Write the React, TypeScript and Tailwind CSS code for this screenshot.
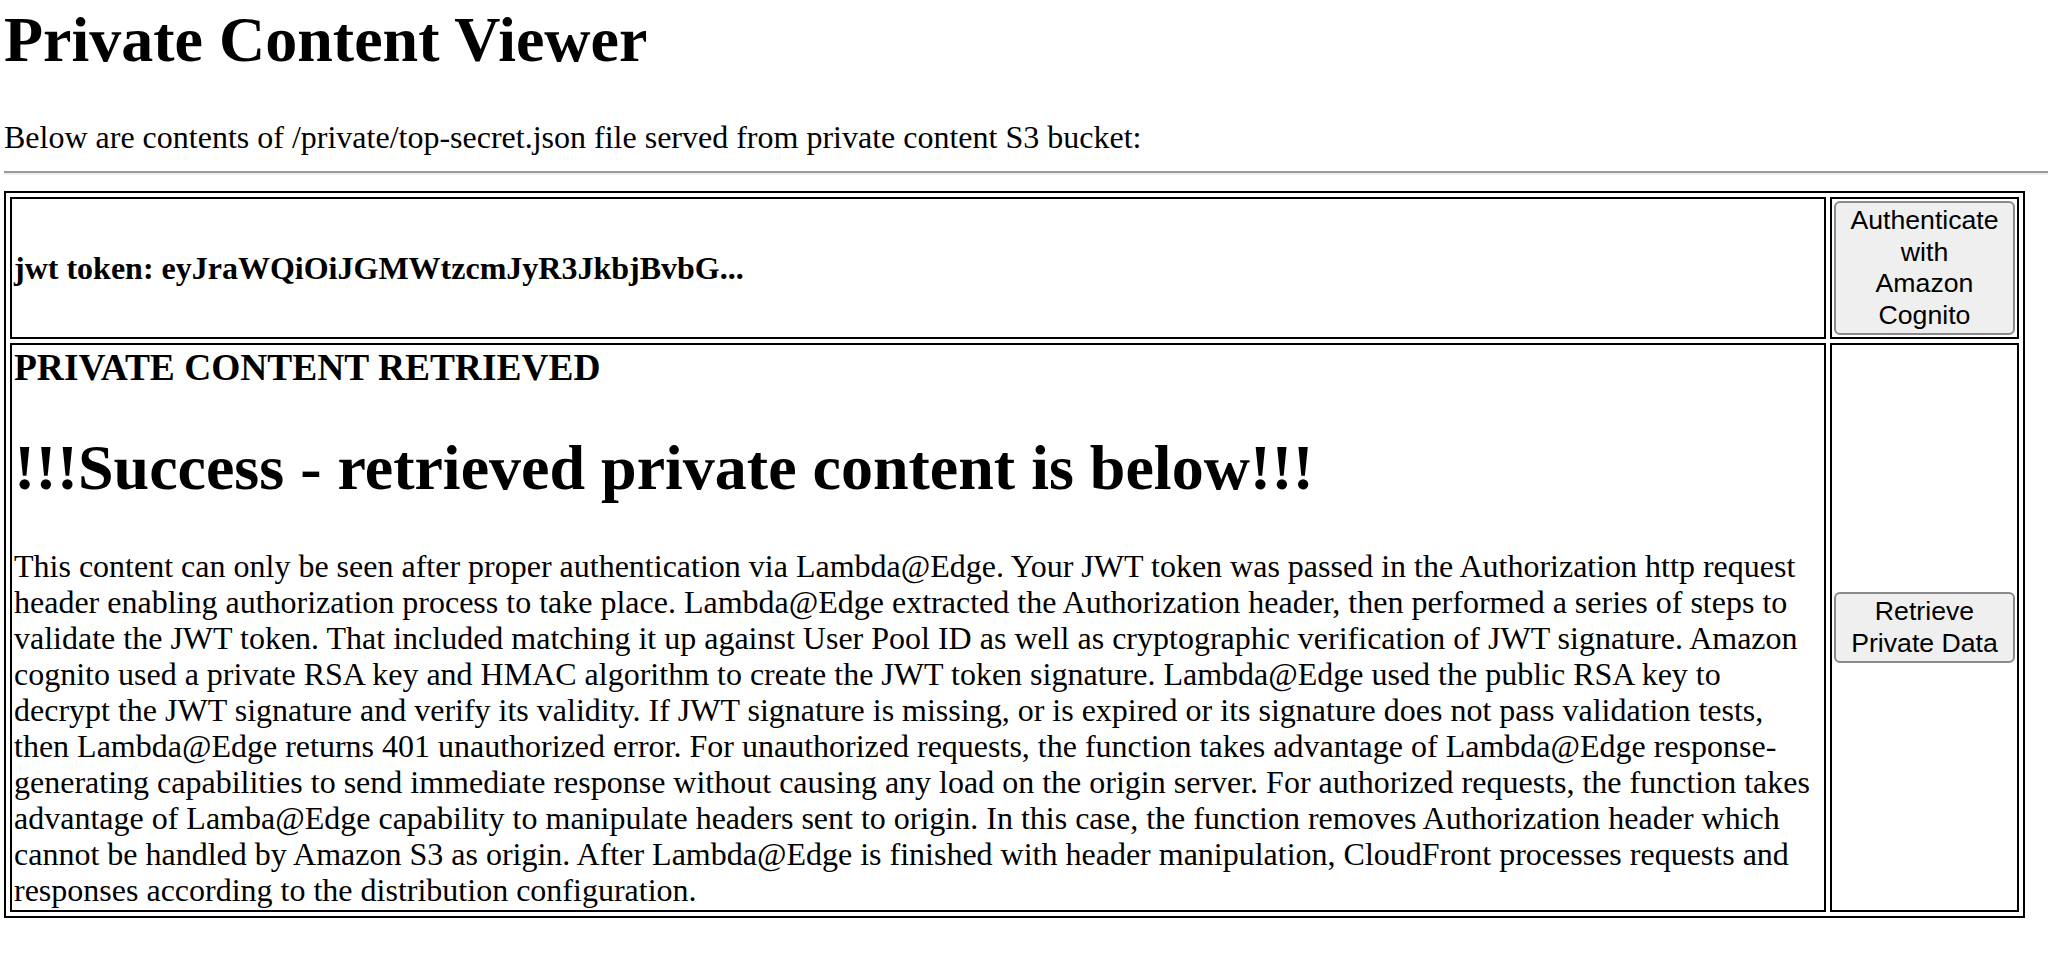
const paragraph = [
  'This content can only be seen after proper authentication via Lambda@Edge. Your JWT token was passed in the Authorization http request',
  'header enabling authorization process to take place. Lambda@Edge extracted the Authorization header, then performed a series of steps to',
  'validate the JWT token. That included matching it up against User Pool ID as well as cryptographic verification of JWT signature. Amazon',
  'cognito used a private RSA key and HMAC algorithm to create the JWT token signature. Lambda@Edge used the public RSA key to',
  'decrypt the JWT signature and verify its validity. If JWT signature is missing, or is expired or its signature does not pass validation tests,',
  'then Lambda@Edge returns 401 unauthorized error. For unauthorized requests, the function takes advantage of Lambda@Edge response-',
  'generating capabilities to send immediate response without causing any load on the origin server. For authorized requests, the function takes',
  'advantage of Lamba@Edge capability to manipulate headers sent to origin. In this case, the function removes Authorization header which',
  'cannot be handled by Amazon S3 as origin. After Lambda@Edge is finished with header manipulation, CloudFront processes requests and',
  'responses according to the distribution configuration.',
];

function PlainButton({ lines }: { lines: string[] }) {
  return (
    <button className="w-[181px] px-[12px] py-[2px] border-2 border-[#8a8a8a] rounded-[6px] bg-[#efefef] text-black text-[26.67px] leading-[31.5px] text-center font-['Liberation_Sans',Arial,sans-serif]">
      {lines.map((l, i) => (
        <span key={i}>
          {l}
          {i < lines.length - 1 && <br />}
        </span>
      ))}
    </button>
  );
}

export default function App() {
  return (
    <div className="bg-white min-h-screen pl-[4px] pt-[4px] text-black font-['Liberation_Serif','Times_New_Roman',serif]">
      <h1 className="m-0 mb-[43px] text-[64px] leading-[72px] font-bold">Private Content Viewer</h1>
      <div className="text-[32px] leading-[36px]">
        Below are contents of /private/top-secret.json file served from private content S3 bucket:
      </div>
      <hr className="my-[16px] h-0 border-0 border-t-2 border-t-[#9a9a9a] border-b-2 border-b-[#eeeeee]" />
      <table className="w-[2021px] border-separate border-spacing-[4px] border-2 border-black">
        <tbody>
          <tr>
            <td className="border-2 border-black p-[2px] align-middle">
              <div className="text-[32px] leading-[36px] font-bold">jwt token: eyJraWQiOiJGMWtzcmJyR3JkbjBvbG...</div>
            </td>
            <td className="w-[189px] border-2 border-black p-[2px] align-middle">
              <PlainButton lines={['Authenticate', 'with', 'Amazon', 'Cognito']} />
            </td>
          </tr>
          <tr>
            <td className="border-2 border-black p-[2px] align-middle">
              <h3 className="m-0 text-[37.44px] leading-[42px] font-bold">PRIVATE CONTENT RETRIEVED</h3>
              <h1 className="mt-[43px] mb-[44px] text-[64px] leading-[72px] font-bold">
                !!!Success - retrieved private content is below!!!
              </h1>
              <p className="text-[32px] leading-[36px]">
                {paragraph.map((line, i) => (
                  <span key={i}>
                    {line}
                    {i < paragraph.length - 1 && <br />}
                  </span>
                ))}
              </p>
            </td>
            <td className="w-[189px] border-2 border-black p-[2px] align-middle">
              <PlainButton lines={['Retrieve', 'Private Data']} />
            </td>
          </tr>
        </tbody>
      </table>
    </div>
  );
}
